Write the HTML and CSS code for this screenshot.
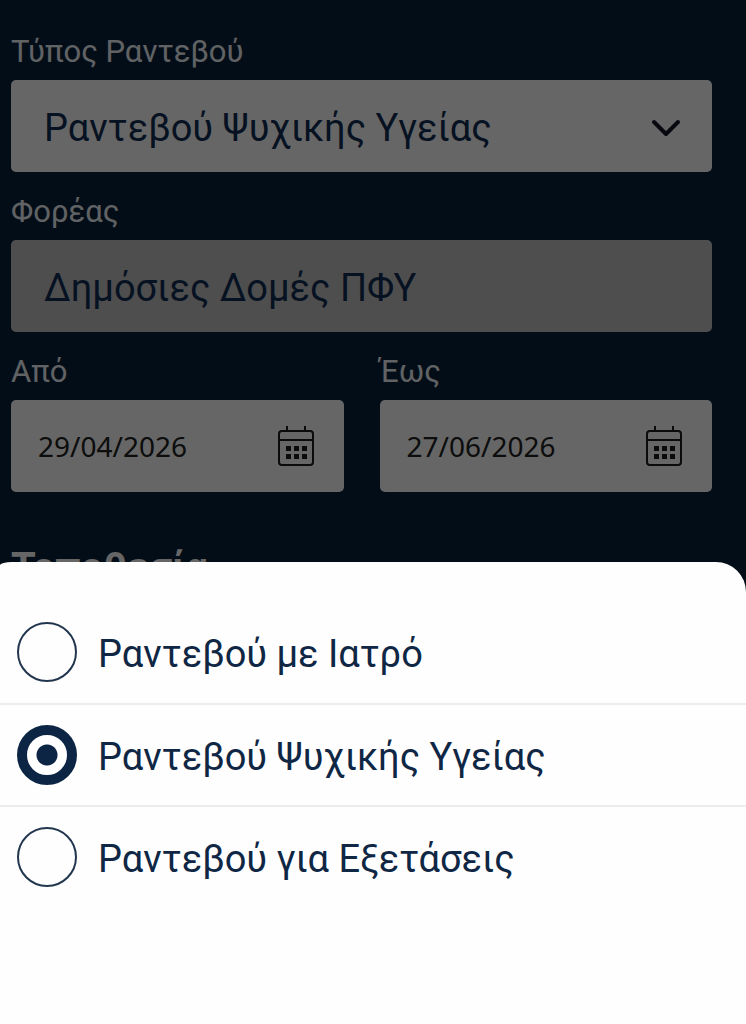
FILE: index.html
```html
<!DOCTYPE html>
<html lang="el">
<head>
    <meta charset="UTF-8">
    <meta name="viewport" content="width=device-width, initial-scale=1.0">
    <title>Ραντεβού</title>
    <link rel="stylesheet" href="styles.css">
</head>
<body>
    <form class="search">
        <div class="field">
            <label for="type">Τύπος Ραντεβού</label>
            <div class="control">
                <select id="type">
                    <option>Ραντεβού με Ιατρό</option>
                    <option selected>Ραντεβού Ψυχικής Υγείας</option>
                    <option>Ραντεβού για Εξετάσεις</option>
                </select>
                <svg class="chevron" viewBox="0 0 30 18" aria-hidden="true">
                    <path d="M3 3l12 12L27 3"/>
                </svg>
            </div>
        </div>

        <div class="field">
            <label for="provider">Φορέας</label>
            <div class="control disabled">
                <input type="text" id="provider" value="Δημόσιες Δομές ΠΦΥ" disabled>
            </div>
        </div>

        <div class="dates">
            <div class="field">
                <label for="from">Από</label>
                <div class="control date">
                    <input type="text" id="from" value="29/04/2026">
                    <svg class="calendar" viewBox="0 0 36 42" aria-hidden="true">
                        <path class="line" d="M9 1v6M27 1v6M1 15h34"/>
                        <rect class="line" x="1" y="6" width="34" height="34" rx="3"/>
                        <path class="dot" d="M8 21h5v5h-5zM16 21h5v5h-5zM24 21h5v5h-5zM8 29h5v5h-5zM16 29h5v5h-5zM24 29h5v5h-5z"/>
                    </svg>
                </div>
            </div>
            <div class="field">
                <label for="to">Έως</label>
                <div class="control date">
                    <input type="text" id="to" value="27/06/2026">
                    <svg class="calendar" viewBox="0 0 36 42" aria-hidden="true">
                        <path class="line" d="M9 1v6M27 1v6M1 15h34"/>
                        <rect class="line" x="1" y="6" width="34" height="34" rx="3"/>
                        <path class="dot" d="M8 21h5v5h-5zM16 21h5v5h-5zM24 21h5v5h-5zM8 29h5v5h-5zM16 29h5v5h-5zM24 29h5v5h-5z"/>
                    </svg>
                </div>
            </div>
        </div>

        <h2>Τοποθεσία</h2>
    </form>

    <div class="backdrop"></div>

    <div class="sheet" role="dialog" aria-label="Τύπος Ραντεβού">
        <label class="option">
            <input type="radio" name="appointment">
            <span>Ραντεβού με Ιατρό</span>
        </label>
        <label class="option">
            <input type="radio" name="appointment" checked>
            <span>Ραντεβού Ψυχικής Υγείας</span>
        </label>
        <label class="option">
            <input type="radio" name="appointment">
            <span>Ραντεβού για Εξετάσεις</span>
        </label>
    </div>
</body>
</html>
```
FILE: styles.css
```css
* {
    box-sizing: border-box;
}

body {
    margin: 0;
    min-height: 100vh;
    overflow: hidden;
    font-family: Roboto, sans-serif;
    background-color: #08213b;
}

.search {
    display: flex;
    flex-direction: column;
    gap: 20px;
    padding: 32px 34px 0 11px;
}

.field {
    display: flex;
    flex-direction: column;
    gap: 8px;
    min-width: 0;
}

.field label {
    font-size: 31px;
    line-height: 40px;
    color: #f0f4fa;
}

.control {
    display: flex;
    align-items: center;
    height: 92px;
    padding: 0 31px 0 33px;
    background-color: #fff;
    border-radius: 5px;
}

.control select,
.control input {
    flex: 1;
    width: 100%;
    min-width: 0;
    height: 100%;
    padding: 4px 0 0;
    border: none;
    outline: none;
    background: none;
    appearance: none;
    font-family: inherit;
    font-size: 38px;
    color: #0f2f54;
    opacity: 1;
}

.control.disabled {
    background-color: #c3c3c3;
}

.control.date {
    padding: 0 30px 0 27px;
}

.control.date input {
    padding: 0;
    font-family: "Noto Sans", sans-serif;
    font-size: 28px;
    color: #222;
}

.chevron {
    width: 30px;
    height: 18px;
    margin-top: 4px;
    fill: none;
    stroke: #141428;
    stroke-width: 4;
    stroke-linecap: round;
    stroke-linejoin: round;
}

.calendar {
    flex: none;
    width: 36px;
    height: 42px;
}

.calendar .line {
    fill: none;
    stroke: #1c1c1c;
    stroke-width: 2;
}

.calendar .dot {
    fill: #1c1c1c;
}

.dates {
    display: grid;
    grid-template-columns: 1fr 1fr;
    gap: 36px;
}

h2 {
    margin: 32px 0 0;
    font-size: 40px;
    line-height: 48px;
    color: #fff;
}

.backdrop {
    position: fixed;
    inset: 0;
    background-color: rgba(0, 0, 0, 0.6);
}

.sheet {
    position: fixed;
    left: 0;
    right: 0;
    bottom: 0;
    padding: 39px 0 117px;
    background-color: #fefefe;
    border-radius: 12px 30px 0 0 / 3px 30px 0 0;
}

.option {
    display: flex;
    align-items: center;
    gap: 21px;
    height: 102px;
    padding: 0 17px;
    font-size: 38px;
    color: #0f2744;
}

.option + .option {
    border-top: 2px solid #ededed;
}

.option span {
    padding-top: 4px;
}

.option input {
    width: 60px;
    height: 60px;
    margin: 0;
    appearance: none;
    border: 2px solid #22364e;
    border-radius: 50%;
}

.option input:checked {
    border: 10px solid #0c2544;
    background: radial-gradient(circle, #0c2544 10px, #fff 11px);
}
```
